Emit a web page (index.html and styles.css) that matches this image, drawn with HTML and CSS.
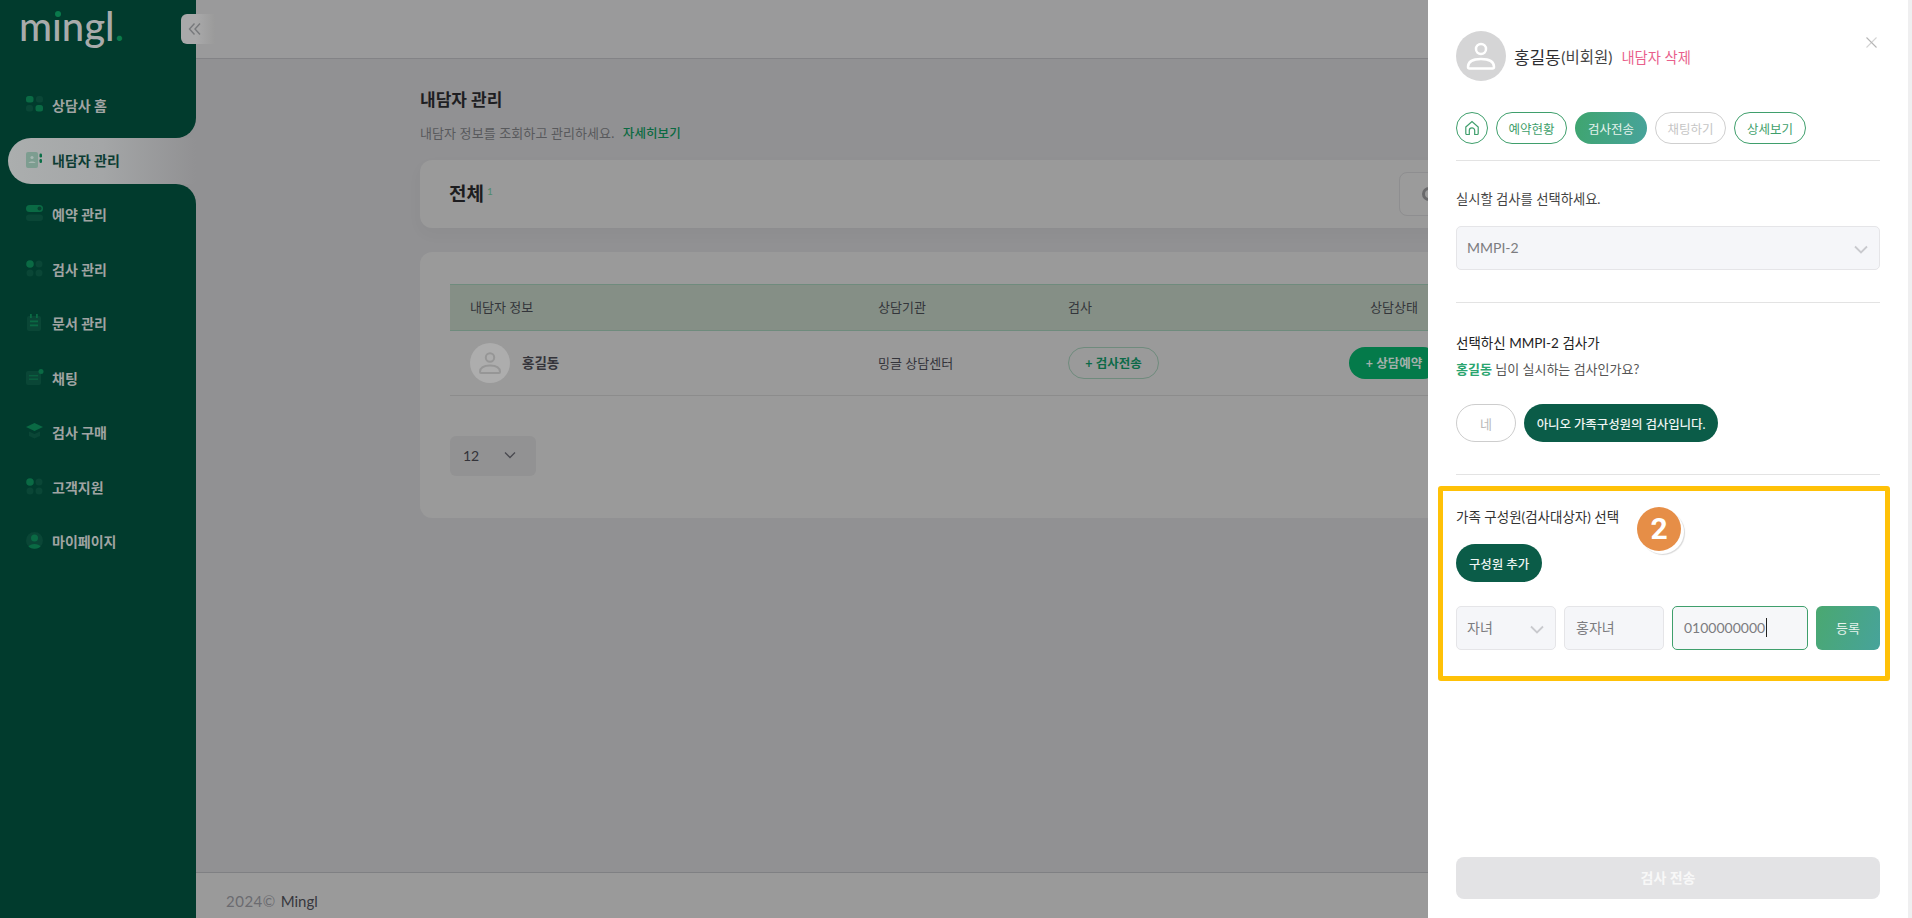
FILE: index.html
```html
<!DOCTYPE html>
<html lang="ko">
<head>
<meta charset="utf-8">
<title>내담자 관리 - Mingl</title>
<link rel="stylesheet" href="styles.css">
</head>
<body>
<div class="app">
  <aside class="sidebar">
    <div class="logo">m<span class="logo-i">ı<i class="logo-dot"></i></span>ngl<span class="logo-end">.</span></div>
    <button class="collapse" aria-label="접기">
      <svg width="14" height="14" viewBox="0 0 14 14" fill="none" stroke="#77797c" stroke-width="1.4"><path d="M6.5 1.5 1.5 7l5 5.5M12 1.5 7 7l5 5.5"/></svg>
    </button>
    <nav class="nav">
      <a class="nav-item">
        <svg class="nav-icon" viewBox="0 0 18 18"><rect x="0" y="0" width="7.5" height="6.5" rx="2.5" fill="#0a6a44"/><rect x="10" y="0" width="7" height="6.5" rx="2.5" fill="#0a4636"/><rect x="0" y="9" width="7" height="6.5" rx="2.5" fill="#0a4636"/><rect x="9.5" y="9" width="7.5" height="6.5" rx="2.5" fill="#0a6a44"/></svg>
        <span>상담사 홈</span>
      </a>
      <a class="nav-item active">
        <svg class="nav-icon" viewBox="0 0 18 18"><rect x="0" y="1" width="12" height="16" rx="2" fill="#7d9d90"/><circle cx="6" cy="6.5" r="1.6" fill="#a8b8b2"/><path d="M2.5 12c.6-2 6.400-2 7 0z" fill="#a8b8b2"/><rect x="13.500" y="2.500" width="2.500" height="4" rx="1.200" fill="#0a6e46"/><rect x="13.500" y="8" width="2.500" height="4" rx="1.200" fill="#0a6e46"/></svg>
        <span>내담자 관리</span>
      </a>
      <a class="nav-item">
        <svg class="nav-icon" viewBox="0 0 18 18"><rect x="0" y="0" width="17" height="7" rx="3.500" fill="#0a6a44"/><circle cx="13.500" cy="3.500" r="2" fill="#07422f"/><rect x="0" y="9.500" width="17" height="6.500" rx="3" fill="#0a4636"/></svg>
        <span>예약 관리</span>
      </a>
      <a class="nav-item">
        <svg class="nav-icon" viewBox="0 0 18 18"><circle cx="4" cy="4" r="3.800" fill="#0a6a44"/><circle cx="13" cy="4" r="3.500" fill="#0a4636"/><circle cx="4" cy="13" r="3.500" fill="#0a4636"/><circle cx="13" cy="13" r="3.500" fill="#0a4636"/></svg>
        <span>검사 관리</span>
      </a>
      <a class="nav-item">
        <svg class="nav-icon" viewBox="0 0 18 18"><rect x="1" y="2" width="14" height="15" rx="2" fill="#0a4636"/><rect x="4" y="0" width="1.800" height="4" fill="#0a6a44"/><rect x="10" y="0" width="1.800" height="4" fill="#0a6a44"/><rect x="4" y="6.500" width="8" height="1.800" fill="#0a6a44"/><rect x="4" y="10.500" width="8" height="1.800" fill="#0a6a44"/></svg>
        <span>문서 관리</span>
      </a>
      <a class="nav-item">
        <svg class="nav-icon" viewBox="0 0 18 18"><rect x="0" y="2" width="15" height="14" rx="2" fill="#0a4636"/><rect x="3" y="6" width="9" height="1.400" fill="#0a6040"/><rect x="3" y="9.500" width="9" height="1.400" fill="#0a6040"/><circle cx="15" cy="2.500" r="2.500" fill="#0a6a44"/></svg>
        <span>채팅</span>
      </a>
      <a class="nav-item">
        <svg class="nav-icon" viewBox="0 0 18 18"><path d="M8.500 0 17 4 8.500 8 0 4z" fill="#0a6a44"/><path d="M3 8.500 8.500 11 14 8.500V13l-5.500 2.500L3 13z" fill="#0a4636"/></svg>
        <span>검사 구매</span>
      </a>
      <a class="nav-item">
        <svg class="nav-icon" viewBox="0 0 18 18"><circle cx="4" cy="4" r="3.800" fill="#0a6a44"/><circle cx="13" cy="4" r="3.500" fill="#0a4636"/><circle cx="4" cy="13" r="3.500" fill="#0a4636"/><circle cx="13" cy="13" r="3.500" fill="#0a4636"/></svg>
        <span>고객지원</span>
      </a>
      <a class="nav-item">
        <svg class="nav-icon" viewBox="0 0 18 18"><circle cx="8.500" cy="8.500" r="8.500" fill="#0a4636"/><circle cx="8.500" cy="6" r="3.500" fill="#0a6a44"/><path d="M2.500 14.500c1.500-3.500 10.500-3.500 12 0-3 3-9 3-12 0z" fill="#0a6a44"/></svg>
        <span>마이페이지</span>
      </a>
    </nav>
  </aside>

  <main class="main">
    <header class="topbar"></header>
    <section class="content">
      <h1 class="page-title">내담자 관리</h1>
      <p class="page-desc">내담자 정보를 조회하고 관리하세요. <a class="more">자세히보기</a></p>
      <div class="card filter-card">
        <h2 class="filter-title">전체<sup class="count">1</sup></h2>
        <div class="search-box"><span class="search-dot"></span></div>
      </div>
      <div class="card table-card">
        <div class="table-row table-head">
          <span>내담자 정보</span><span>상담기관</span><span>검사</span><span class="head-status">상담상태</span>
        </div>
        <div class="table-row table-body">
          <div class="client">
            <svg class="client-avatar" viewBox="0 0 40 40"><circle cx="20" cy="20" r="20" fill="#adadad"/><circle cx="20" cy="14.500" r="4.200" fill="none" stroke="#969696" stroke-width="2"/><path d="M10 29c0-5 4-6.500 10-6.500S30 24 30 29c0 .8-.5 1-1 1H11c-.5 0-1-.2-1-1z" fill="none" stroke="#969696" stroke-width="2"/></svg>
            <strong>홍길동</strong>
          </div>
          <span class="cell-text">밍글 상담센터</span>
          <span><a class="pill-outline">+ 검사전송</a></span>
          <span><a class="pill-fill">+ 상담예약</a></span>
        </div>
        <div class="per-page">12
          <svg width="12" height="8" viewBox="0 0 12 8" fill="none" stroke="#4a4a50" stroke-width="1.300"><path d="M1 1.500 6 6.500l5-5"/></svg>
        </div>
      </div>
    </section>
    <footer class="footer"><span class="year">2024©</span> <span class="brand">Mingl</span></footer>
  </main>

  <aside class="drawer">
    <div class="drawer-body">
      <div class="profile">
        <svg class="profile-avatar" viewBox="0 0 50 50"><circle cx="25" cy="25" r="25" fill="#d5d5d6"/><circle cx="25" cy="18" r="5" fill="none" stroke="#fff" stroke-width="2.500"/><path d="M12 36c0-6 5-8 13-8s13 2 13 8c0 1-.6 1.500-1.500 1.500h-23C12.600 37.500 12 37 12 36z" fill="none" stroke="#fff" stroke-width="2.500"/></svg>
        <span class="profile-name">홍길동</span><span class="profile-tag">(비회원)</span>
        <a class="delete-link">내담자 삭제</a>
        <svg class="close" width="11" height="11" viewBox="0 0 11 11" fill="none" stroke="#b5b5b5" stroke-width="1.100"><path d="M.5.5l10 10"/><path d="M10.500.5l-10 10" stroke-opacity=".6"/></svg>
      </div>
      <div class="tabs">
        <a class="tab tab-home"><svg width="16" height="16" viewBox="0 0 16 16" fill="none" stroke="#3f9f6c" stroke-width="1.200"><path d="M1.800 7 8 1.500 14.200 7v6.500a1 1 0 0 1-1 1h-2.500v-4a2.700 2.700 0 0 0-5.400 0v4H2.800a1 1 0 0 1-1-1z"/></svg></a>
        <a class="tab">예약현황</a>
        <a class="tab tab-on">검사전송</a>
        <a class="tab tab-off">채팅하기</a>
        <a class="tab">상세보기</a>
      </div>
      <section class="block block-test">
        <p class="label">실시할 검사를 선택하세요.</p>
        <div class="field field-wide">MMPI-2<svg class="chevron" width="14" height="9" viewBox="0 0 14 9" fill="none" stroke="#c9cace" stroke-width="1.800"><path d="M1 1.500l6 6 6-6"/></svg></div>
      </section>
      <section class="block block-who">
        <p class="question">선택하신 MMPI-2 검사가</p>
        <p class="question-sub"><b>홍길동</b> 님이 실시하는 검사인가요?</p>
        <div class="choice">
          <a class="btn-round btn-ghost">네</a>
          <a class="btn-round btn-dark">아니오 가족구성원의 검사입니다.</a>
        </div>
      </section>
      <section class="block block-family">
        <p class="family-title">가족 구성원(검사대상자) 선택</p>
        <a class="btn-round btn-dark btn-add">구성원 추가</a>
        <div class="family-form">
          <div class="field field-rel">자녀<svg class="chevron" width="14" height="9" viewBox="0 0 14 9" fill="none" stroke="#c9cace" stroke-width="1.800"><path d="M1 1.500l6 6 6-6"/></svg></div>
          <div class="field field-name">홍자녀</div>
          <div class="field field-phone">0100000000<i class="caret"></i></div>
          <a class="submit">등록</a>
        </div>
      </section>
      <div class="highlight"></div>
      <div class="badge">2</div>
      <a class="send">검사 전송</a>
    </div>
  </aside>
</div>
</body>
</html>
```

FILE: styles.css
```css
* { box-sizing: border-box; }
html, body { margin: 0; height: 100%; }
body {
  font-family: "Lato", "Noto Sans CJK KR", sans-serif;
  font-size: 14px;
  color: #333;
  overflow: hidden;
  background: #919193;
}
a { text-decoration: none; color: inherit; }
p, h1, h2 { margin: 0; }
.app { position: relative; display: flex; width: 1912px; height: 918px; overflow: hidden; }

/* sidebar */
.sidebar { position: relative; flex: 0 0 196px; background: #013b2d; }
.logo {
  position: absolute; left: 19px; top: 0;
  font-size: 40px; line-height: 52px; font-weight: 500;
  color: #a9abab;
}
.logo-i { position: relative; }
.logo-dot { position: absolute; left: 3px; top: 9px; width: 6px; height: 6px; border-radius: 50%; background: #0a7a4c; }
.logo-end { color: #0a7a4c; }
.collapse {
  position: absolute; left: 181px; top: 14px; z-index: 2;
  display: flex; align-items: center; justify-content: flex-end;
  width: 34px; height: 30px; padding: 0 13px 0 0; border: 0; border-radius: 6px 0 0 6px;
  background: linear-gradient(90deg, #a9a9aa 0, #a9a9aa 44%, #9a9a9a 100%);
}
.nav { display: flex; flex-direction: column; gap: 8.5px; padding: 83px 0 0 8px; }
.nav-item {
  position: relative; display: flex; align-items: center; gap: 8px;
  height: 46px; padding: 0 0 2px 18px;
  font-weight: 700; font-size: 14px; color: #a0a4a3;
}
.nav-icon { flex: 0 0 18px; width: 18px; height: 18px; }
.nav-item.active {
  color: #0d3d33;
  background: linear-gradient(90deg, #abaeae 0, #a4a6a7 50%, #919193 100%);
  border-radius: 23px 0 0 23px;
}
.nav-item.active::before, .nav-item.active::after {
  content: ""; position: absolute; right: 0; width: 20px; height: 20px; background: #919193;
}
.nav-item.active::before { top: -20px; }
.nav-item.active::after { bottom: -20px; }
.nav-item.active span { position: relative; z-index: 1; }
.nav-item:has(+ .active)::after, .active + .nav-item::after {
  content: ""; position: absolute; right: 0; width: 20px; height: 20px; background: #013b2d; z-index: 1;
}
.nav-item:has(+ .active)::after { bottom: -8.5px; border-bottom-right-radius: 20px; }
.active + .nav-item::after { top: -8.5px; border-top-right-radius: 20px; }

/* main */
.main { flex: 1; display: flex; flex-direction: column; min-width: 0; }
.topbar { flex: 0 0 59px; background: #9a9a9b; border-bottom: 1px solid #838386; }
.content { flex: 1; padding: 29px 28px 0 224px; }
.page-title { font-size: 17px; line-height: 24px; font-weight: 700; color: #1e1e22; }
.page-desc { margin-top: 11px; font-size: 13px; line-height: 20px; color: #58595c; letter-spacing: .1px; }
.more { margin-left: 5px; color: #0b6a42; font-weight: 500; font-size: 12.5px; }
.card { background: #9a9a9a; border-radius: 12px; }
.filter-card {
  display: flex; align-items: center; justify-content: space-between;
  height: 68px; margin-top: 16px; padding: 0 12px 0 29px;
  box-shadow: 0 6px 16px rgba(0,0,0,.03);
}
.filter-title { padding-bottom: 3px; font-size: 19px; font-weight: 700; color: #1d1d20; }
.count { margin-left: 3px; font-size: 10px; font-weight: 400; color: #4f8a6c; vertical-align: 6px; line-height: 0; }
.search-box { position: relative; width: 473px; height: 44px; border: 1px solid #8e8e90; border-radius: 8px; background: #9b9b9b; }
.search-dot { position: absolute; left: 22px; top: 14px; width: 14px; height: 14px; border-radius: 50%; border: 3px solid #6a6a6c; }
.table-card { height: 266px; margin-top: 24px; padding: 32px 30px 0; }
.table-row { display: grid; grid-template-columns: 428px 190px 281px 1fr; align-items: center; }
.table-head {
  height: 47px; padding-bottom: 2px; background: #858f86;
  border-top: 1px solid #6f8b7d; border-bottom: 1px solid #6f8b7d;
  color: #33353a; font-size: 13px;
}
.table-head > span:first-child { padding-left: 20px; }
.head-status { padding-left: 21px; }
.table-body { height: 65px; border-bottom: 1px solid #8c8c8c; color: #34343a; font-size: 13px; }
.client { display: flex; align-items: center; gap: 12px; padding-left: 20px; }
.client strong { padding-bottom: 2px; font-weight: 700; font-size: 13.5px; }
.client-avatar { width: 40px; height: 40px; }
.cell-text { padding-bottom: 2px; }
.pill-outline, .pill-fill {
  display: inline-flex; align-items: center; justify-content: center;
  height: 32px; padding-bottom: 2px; border-radius: 16px; font-weight: 700; font-size: 12.5px;
}
.pill-outline { width: 91px; border: 1px solid #6f8b7d; color: #0c6a48; }
.pill-fill { width: 90px; background: #047a4a; color: #a3b0ab; }
.per-page {
  display: flex; align-items: center; justify-content: space-between;
  width: 86px; height: 40px; margin-top: 40px; padding: 0 20px 2px 13px;
  background: #929293; border-radius: 6px; color: #34343a; font-size: 14px;
}
.footer { flex: 0 0 46px; padding: 19px 0 0 30px; background: #9a9a9a; border-top: 1px solid #7f8083; font-size: 15px; line-height: 18px; color: #37373d; }
.year { color: #6b6b70; letter-spacing: .5px; }
.brand { margin-left: 1px; }

/* drawer */
.drawer { position: absolute; top: 0; right: 0; bottom: 0; width: 484px; background: #efeff0; }
.drawer-body { position: relative; width: 480px; height: 918px; padding: 31px 28px 0 28px; background: #fff; color: #3a3a3f; }
.profile { position: relative; display: flex; align-items: center; height: 50px; }
.profile-avatar { width: 50px; height: 50px; margin-right: 8px; }
.profile-name { font-size: 17px; font-weight: 400; color: #2e2e32; letter-spacing: -.2px; }
.profile-tag { margin-left: 1px; font-size: 15.5px; color: #444; }
.delete-link { margin-left: 9px; font-size: 14.3px; color: #e95f8c; }
.close { position: absolute; right: 3px; top: 6px; }
.tabs { display: flex; gap: 8px; height: 49px; margin-top: 31px; border-bottom: 1px solid #e3e3e3; }
.tab {
  display: flex; align-items: center; justify-content: center;
  width: 71px; height: 32px; border: 1px solid #3f9f6c; border-radius: 16px;
  font-size: 12.5px; color: #3f9f6c;
}
.tab-home { width: 32px; }
.tab-on { width: 72px; border: 0; background: linear-gradient(100deg, #3fa56f, #47a39b); color: #e6f3ed; }
.tab-off { border-color: #cfcfcf; color: #c5c5c5; }
.tab:last-child { width: 72px; }
.block-test { height: 142px; padding-top: 28px; border-bottom: 1px solid #e3e3e3; }
.label { font-size: 13.3px; line-height: 20px; color: #444; }
.field {
  position: relative; display: flex; align-items: center; height: 44px; padding: 0 0 2px 10px;
  background: #f5f6f9; border: 1px solid #e5e5e8; border-radius: 5px; font-size: 14px; color: #7c7c80;
}
.field-wide { height: 44px; margin-top: 17px; }
.chevron { position: absolute; right: 11px; top: 18px; }
.block-who { height: 172px; padding-top: 30px; border-bottom: 1px solid #e3e3e3; }
.question { font-size: 13.5px; line-height: 20px; font-weight: 400; color: #222; }
.question-sub { margin-top: 6px; font-size: 13px; line-height: 20px; color: #555; }
.question-sub b { color: #2aa56f; font-weight: 700; }
.choice { display: flex; gap: 8px; margin-top: 25px; }
.btn-round { display: inline-flex; align-items: center; justify-content: center; height: 38px; border-radius: 19px; font-size: 13px; }
.btn-ghost { width: 60px; border: 1px solid #cdcdcd; color: #b9b9b9; }
.btn-dark { width: 194px; background: #0b5c48; color: #eef4f2; font-size: 12.5px; font-weight: 500; letter-spacing: -.1px; }
.btn-add { width: 86px; margin-top: 17px; }
.block-family { padding-top: 32px; }
.family-title { font-size: 13.5px; line-height: 20px; color: #333; }
.family-form { display: flex; gap: 8px; margin-top: 24px; }
.field-rel { width: 100px; }
.field-name { width: 100px; padding-left: 11px; }
.field-phone { width: 136px; padding-left: 11px; background: #f6f7f9; border-color: #3f9f6c; }
.caret { display: inline-block; width: 1px; height: 19px; margin-left: 1px; background: #222; }
.submit {
  display: flex; align-items: center; justify-content: center;
  width: 64px; height: 44px; padding-bottom: 2px; border-radius: 6px;
  background: linear-gradient(110deg, #4aa870, #47a39b); color: #e6f3ed; font-size: 13px;
}
.highlight {
  position: absolute; left: 10px; top: 486px; width: 452px; height: 195px;
  border: 5px solid #ffc107; border-radius: 3px; pointer-events: none;
}
.badge {
  position: absolute; left: 209px; top: 507px; width: 44px; height: 44px; border-radius: 50%;
  display: flex; align-items: center; justify-content: center;
  background: #e68e47; color: #fff; font: 700 30px/1 "Roboto", sans-serif;
  box-shadow: 3px 3px 0 0 #fff, 4px 4px 1px 0 #d9d9d9;
}
.send {
  position: absolute; left: 28px; top: 857px; display: flex; align-items: center; justify-content: center;
  width: 424px; height: 42px; padding-bottom: 2px; border-radius: 8px; background: #e3e3e5; color: #f8f8f8; font-size: 14px; font-weight: 700;
}
```
